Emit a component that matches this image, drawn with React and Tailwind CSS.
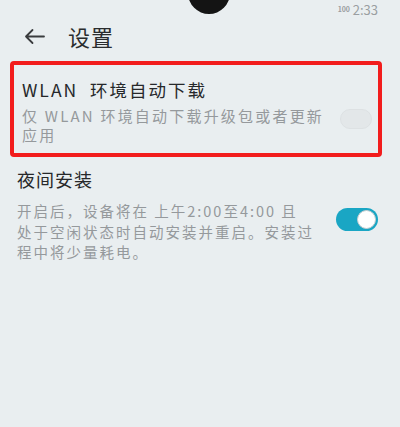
export default function App() {
  const font = { fontFamily: '"Noto Sans CJK SC", "Liberation Sans", sans-serif' };
  return (
    <div className="relative w-[400px] h-[427px] overflow-hidden bg-[#e9eef0]" style={font}>
      {/* notch */}
      <div className="absolute left-[188px] top-[-28px] w-[42px] h-[42px] rounded-full bg-[#141414]" />
      {/* status bar */}
      <div className="flex justify-end items-center h-[17px] pr-[22px] pt-[2px] gap-[3px] text-[#8a8e91]">
        <span className="text-[7px] font-bold text-[#9a9d9f] tracking-tight">100</span>
        <span className="text-[13px] leading-none text-[#9a9ea1]">2:33</span>
      </div>
      {/* header */}
      <div className="flex items-center h-[38px] pl-[24px]">
        <svg width="21" height="17" viewBox="0 0 21 17" fill="none" stroke="#3a3c3e" strokeWidth="1.8" strokeLinecap="round" strokeLinejoin="round">
          <path d="M20 8.5H2M8.5 2L2 8.5l6.5 6.5" />
        </svg>
        <span className="ml-[23px] text-[22px] text-[#2a2c2e] tracking-[1px]">设置</span>
      </div>
      {/* highlighted item */}
      <div className="mx-[10px] mt-[6px] h-[96px] w-[372px] border-[4px] border-[#f21c1c] rounded-[4px] flex items-start pl-[8px] pr-[6px] pt-[14px]">
        <div className="flex-1 whitespace-nowrap">
          <div className="text-[17.5px] leading-[22px] text-[#26282a] tracking-[2px]">WLAN&nbsp; 环境自动下载</div>
          <div className="text-[15px] leading-[19px] text-[#95999c] mt-[5px] tracking-[2.2px]">
            仅&nbsp;WLAN&nbsp;环境自动下载升级包或者更新
            <br />
            应用
          </div>
        </div>
        <div className="w-[32px] h-[20px] rounded-full bg-[#e3e7e9] border border-[#dde1e3] mt-[30px]" />
      </div>
      {/* night install */}
      <div className="flex items-start pl-[17px] pr-[22px] pt-[10px]">
        <div className="flex-1 whitespace-nowrap">
          <div className="text-[18px] leading-[24px] text-[#26282a] tracking-[1px]">夜间安装</div>
          <div className="text-[14.5px] leading-[20.5px] text-[#95999c] mt-[10px] tracking-[2px]">
            开启后，设备将在 上午2:00至4:00 且
            <br />
            处于空闲状态时自动安装并重启。安装过
            <br />
            程中将少量耗电。
          </div>
        </div>
        <div className="mt-[41px] w-[42px] h-[23px] rounded-full bg-[#1aa6c4] flex items-center justify-end p-[2px]">
          <div className="w-[19px] h-[19px] rounded-full bg-white border border-[#c9ced1]" />
        </div>
      </div>
    </div>
  );
}
